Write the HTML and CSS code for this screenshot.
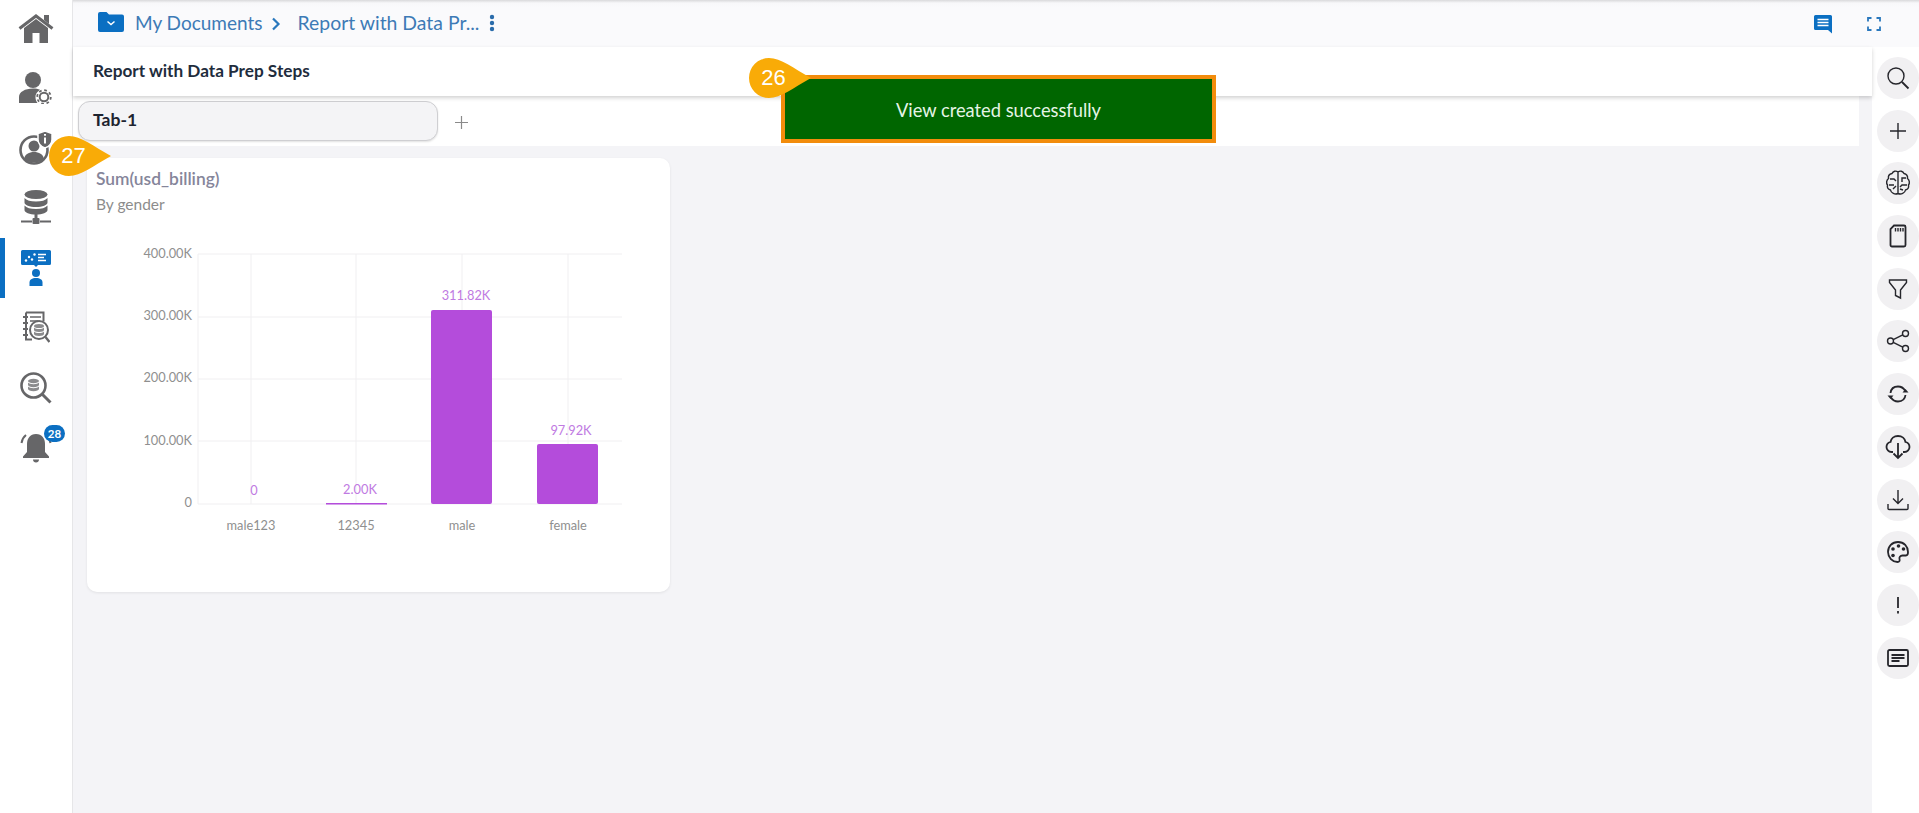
FILE: index.html
```html
<!DOCTYPE html>
<html lang="en">
<head>
    <meta charset="UTF-8">
    <meta name="viewport" content="width=device-width, initial-scale=1.0">
    <title>Report with Data Prep Steps</title>
    <link rel="stylesheet" href="styles.css">
</head>
<body>
    <div class="page">
        <nav class="sidebar">
            <a class="nav-item">
                <svg width="36" height="30" viewBox="0 0 36 30"><path class="fill" d="M6 15 18 6l12 9v15h-8.500V20h-7v10H6z"/><path class="line" d="M1.500 15.500 18 3l16.500 12.500" stroke-width="3"/><path class="fill" d="M26 2h5v9l-5-4z"/></svg>
            </a>
            <a class="nav-item">
                <svg width="34" height="32" viewBox="0 0 34 32"><circle class="fill" cx="14" cy="8" r="8"/><path class="fill" d="M0 31v-6c0-5 6-8.500 14-8.500 3 0 5 .4 7 1.200-3 2-5 4.800-4.500 8.300.2 2 1 3.800 2 5z"/><circle class="line" cx="25" cy="25" r="6.800" stroke-width="1.800" stroke-dasharray="2.700 2.640"/><circle class="line" cx="25" cy="25" r="4.300" stroke-width="2"/></svg>
            </a>
            <a class="nav-item">
                <svg width="34" height="36" viewBox="0 0 34 36"><circle class="line" cx="15" cy="20" r="13.500" stroke-width="2.600"/><circle class="fill" cx="15" cy="16" r="5.500"/><path class="fill" d="M5 29c1-5 5-7 10-7s9 2 10 7c-3 2.500-6 3.500-10 3.500S8 31.500 5 29z"/><path class="fill" d="M26 1l7 2.500v6c0 4-3 7-7 8.500-4-1.500-7-4.500-7-8.500v-6z" stroke="#fff" stroke-width="1.500"/><path class="cut" d="M26 4v1.800M26 7.500v6" stroke-width="2"/></svg>
            </a>
            <a class="nav-item">
                <svg width="30" height="36" viewBox="0 0 30 36"><ellipse class="fill" cx="15" cy="4.500" rx="11.500" ry="4.500"/><path class="fill" d="M3.500 8c2 2.500 6 3.500 11.500 3.500S24.500 10.500 26.500 8v4.500c0 2.500-5 4.500-11.500 4.500S3.500 15 3.500 12.500z"/><path class="fill" d="M3.500 15.500c2 2.500 6 3.500 11.500 3.500s9.500-1 11.500-3.500V20c0 2.500-5 4.500-11.500 4.500S3.500 22.500 3.500 20z"/><path class="fill" d="M13.500 24h3v5h-3z"/><rect class="fill" x="11.500" y="28" width="7" height="6" rx="1"/><path class="line" d="M0 31.500h11M19 31.500h11" stroke-width="2"/></svg>
            </a>
            <a class="nav-item active">
                <svg width="30" height="36" viewBox="0 0 30 36"><path class="blue" d="M1.500 0h27A1.500 1.500 0 0 1 30 1.500V13.500a1.500 1.500 0 0 1-1.500 1.500H17l-2 2-2-2H1.500A1.500 1.500 0 0 1 0 13.500V1.500A1.500 1.500 0 0 1 1.500 0z"/><circle class="white" cx="5" cy="10.500" r="1.200"/><circle class="white" cx="8" cy="7" r="1.200"/><circle class="white" cx="11" cy="9.500" r="1.200"/><circle class="white" cx="13.500" cy="4.500" r="1.200"/><path class="cut" d="M17 4.500h8M17 7.500h6M17 10.500h8" stroke-width="1.300"/><circle class="blue" cx="15" cy="23" r="4"/><path class="blue" d="M8.500 36v-3.500c0-3 2.500-4.500 6.500-4.500s6.500 1.500 6.500 4.500V36z"/></svg>
            </a>
            <a class="nav-item">
                <svg width="28" height="34" viewBox="0 0 28 34"><path class="line" d="M4 1.500h17.500v9M4 1.500v27h6" stroke-width="2"/><path class="line" d="M1 6h5M1 12h5M1 18h5M1 24h5" stroke-width="2"/><path class="line" d="M8 6h11M8 10h8" stroke-width="1.500"/><circle class="line" cx="17" cy="19" r="9" stroke-width="2"/><ellipse class="soft" cx="17" cy="15" rx="5" ry="2"/><path class="soft" d="M12 16.500c1 1 3 1.500 5 1.500s4-.5 5-1.500V19c0 1-2 2-5 2s-5-1-5-2z"/><path class="soft" d="M12 20.500c1 1 3 1.500 5 1.500s4-.5 5-1.500V23c0 1-2 2-5 2s-5-1-5-2z"/><path class="line" d="M23.500 26l4 5" stroke-width="2.400"/></svg>
            </a>
            <a class="nav-item">
                <svg width="32" height="32" viewBox="0 0 32 32"><circle class="line" cx="13.500" cy="13.500" r="12" stroke-width="2.600"/><ellipse class="soft" cx="13.500" cy="9" rx="5.500" ry="2.200"/><path class="soft" d="M8 10.500c1 1 3.200 1.700 5.500 1.700s4.500-.7 5.500-1.700V13c0 1.200-2.500 2.200-5.500 2.200S8 14.200 8 13z"/><path class="soft" d="M8 14.500c1 1 3.200 1.700 5.500 1.700s4.500-.7 5.500-1.700V17c0 1.200-2.500 2.200-5.500 2.200S8 18.200 8 17z"/><path class="line" d="M22.500 22.500l8 8" stroke-width="3"/></svg>
            </a>
            <a class="nav-item bell-item">
                <svg width="32" height="32" viewBox="0 0 32 32"><path class="fill" d="M16 2c6 0 9 4.500 9 10v8l4 4.500v1.500H3v-1.500L7 20v-8C7 6.500 10 2 16 2z"/><path class="fill" d="M13 27.500h6c0 2-1.300 3-3 3s-3-1-3-3z"/><path class="line" d="M1.500 11C2 7.500 3.500 5 6 3M30.500 11C30 7.500 28.500 5 26 3" stroke-width="2"/></svg>
                <span class="bell-count">28</span>
            </a>
        </nav>

        <div class="main">
            <header class="crumbs">
                <svg class="folder" width="26" height="20" viewBox="0 0 26 20"><path class="blue" d="M0 2a2 2 0 0 1 2-2h6.500l2.500 2.500h13a2 2 0 0 1 2 2V18a2 2 0 0 1-2 2H2a2 2 0 0 1-2-2z"/><path class="cut" d="M9.500 9.500l3.500 3 3.500-3" stroke-width="1.500"/></svg>
                <span class="crumb">My Documents</span>
                <svg class="crumb-arrow" width="10" height="14" viewBox="0 0 10 14"><path class="arrow" d="M2 1.500 7.500 7 2 12.500" stroke-width="2.200"/></svg>
                <span class="crumb crumb-report">Report with Data Pr...</span>
                <svg class="kebab" width="6" height="18" viewBox="0 0 6 18"><circle class="dark-blue" cx="3" cy="3" r="2.200"/><circle class="dark-blue" cx="3" cy="9" r="2.200"/><circle class="dark-blue" cx="3" cy="15" r="2.200"/></svg>
                <div class="crumb-tools">
                    <svg width="19" height="19" viewBox="0 0 19 19"><path class="blue" d="M1.500 0h15A1.500 1.500 0 0 1 18 1.500V18.500L14 15H1.500A1.500 1.500 0 0 1 0 13.500v-12A1.500 1.500 0 0 1 1.500 0z"/><path class="cut" d="M3.500 4.500h11M3.500 7.500h11M3.500 10.500h11" stroke-width="1.600"/></svg>
                    <svg width="14" height="14" viewBox="0 0 14 14"><path class="arrow" d="M1 4.500V1h3.500M9.500 1H13v3.500M13 9.500V13H9.500M4.500 13H1V9.500" stroke-width="1.800"/></svg>
                </div>
            </header>

            <div class="workspace">
                <section class="report">
                    <div class="report-title">Report with Data Prep Steps</div>
                    <div class="tab-strip">
                        <div class="tab">Tab-1</div>
                        <svg class="tab-add" width="13" height="13" viewBox="0 0 13 13"><path class="thin" d="M6.500 0v13M0 6.500h13"/></svg>
                    </div>
                    <div class="canvas">
                        <article class="card">
                            <h3 class="card-title">Sum(usd_billing)</h3>
                            <p class="card-sub">By gender</p>
                            <svg class="chart" width="583" height="340" viewBox="87 224 583 340">
                                <path class="grid" d="M198 254H622M198 317H622M198 379H622M198 441H622M198 504H622"/>
                                <path class="grid" d="M198 254V504M251 254V504M356 254V504M462 254V504M568 254V504"/>
                                <rect class="bar" x="326" y="503" width="61" height="1.500"/>
                                <rect class="bar" x="431" y="310" width="61" height="194" rx="2"/>
                                <rect class="bar" x="537" y="444" width="61" height="60" rx="2"/>
                                <text class="y-label" x="192" y="258">400.00K</text>
                                <text class="y-label" x="192" y="320">300.00K</text>
                                <text class="y-label" x="192" y="382">200.00K</text>
                                <text class="y-label" x="192" y="445">100.00K</text>
                                <text class="y-label" x="192" y="507">0</text>
                                <text class="x-label" x="251" y="530">male123</text>
                                <text class="x-label" x="356" y="530">12345</text>
                                <text class="x-label" x="462" y="530">male</text>
                                <text class="x-label" x="568" y="530">female</text>
                                <text class="value" x="254" y="495">0</text>
                                <text class="value" x="360" y="494">2.00K</text>
                                <text class="value" x="466" y="300">311.82K</text>
                                <text class="value" x="571" y="435">97.92K</text>
                            </svg>
                        </article>
                    </div>
                </section>

                <aside class="rail">
                    <button class="rail-btn"><svg width="24" height="24" viewBox="0 0 24 24"><circle class="ink" cx="10" cy="10" r="8"/><path class="ink heavy" d="M16 16l6.500 6.500"/></svg></button>
                    <button class="rail-btn"><svg width="24" height="24" viewBox="0 0 24 24"><path class="ink" d="M12 4v16M4 12h16"/></svg></button>
                    <button class="rail-btn"><svg width="26" height="26" viewBox="0 0 26 26"><path class="ink" d="M13 2v22M13 2c-2-1.500-5-1-6 1.500C4.500 4 3 6 3.500 8.500 1.500 10 1 13 2.500 15c-.5 2.500 1 4.500 3 5 .5 3 4.500 5 7.500 3.500M13 2c2-1.500 5-1 6 1.500C21.500 4 23 6 22.500 8.500c2 1.500 2.500 4.500 1 6.500.5 2.500-1 4.500-3 5-.5 3-4.500 5-7.500 3.500"/><path class="ink" d="M5 9h4l2 2M4 15h5M8 19l3-3M21 8h-4v4M22 15h-5l-2 2M18 20l-3-1"/></svg></button>
                    <button class="rail-btn"><svg width="24" height="24" viewBox="0 0 24 24"><path class="ink heavy" d="M8 1.500h10a1.500 1.500 0 0 1 1.500 1.500v18a1.500 1.500 0 0 1-1.500 1.500H6A1.500 1.500 0 0 1 4.500 21V5z"/><path class="ink" d="M9.500 4v3.500M12 4v3.500M14.500 4v3.500M17 4v3.500"/></svg></button>
                    <button class="rail-btn"><svg width="24" height="24" viewBox="0 0 24 24"><path class="ink" d="M3.500 3h17v2.500L14.500 13v8l-5-2.500V13L3.500 5.500z"/></svg></button>
                    <button class="rail-btn"><svg width="24" height="24" viewBox="0 0 24 24"><circle class="ink" cx="4.500" cy="12" r="3"/><circle class="ink" cx="19.500" cy="4.500" r="3"/><circle class="ink" cx="19.500" cy="19.500" r="3"/><path class="ink" d="M7.200 10.600l9.600-4.800M7.200 13.400l9.600 4.800"/></svg></button>
                    <button class="rail-btn"><svg width="24" height="24" viewBox="0 0 24 24"><path class="ink heavy" d="M4.500 11C5 7 8 4.500 12 4.500c3 0 5.500 1.500 7 4M19.500 13c-.5 4-3.500 6.500-7.500 6.500-3 0-5.500-1.500-7-4"/><path class="solid" d="M16.500 10.500h6L19.500 7zM1.500 13.500h6L4.500 17z"/></svg></button>
                    <button class="rail-btn"><svg width="26" height="26" viewBox="0 0 26 26"><path class="ink heavy" d="M8 18H6.500C3.500 18 1.500 15.500 1.500 13c0-2.500 2-4.500 4-5 .5-3.500 3.500-6 7.500-6s7 2.500 7.500 6c2 .5 4 2.500 4 5 0 2.500-2 5-5 5H18"/><path class="ink heavy" d="M13 9v15M8.500 19.500 13 24l4.500-4.500"/></svg></button>
                    <button class="rail-btn"><svg width="24" height="24" viewBox="0 0 24 24"><path class="ink" d="M12 2v13M7 10.500l5 5 5-5"/><path class="ink" d="M2 16v4.500a1 1 0 0 0 1 1h18a1 1 0 0 0 1-1V16"/></svg></button>
                    <button class="rail-btn"><svg width="24" height="24" viewBox="0 0 24 24"><path class="ink heavy" d="M12 2C6 2 2 6.500 2 12s4.500 10 9.500 10c2 0 2.500-1.500 2-3-.5-1.500.5-3.500 3-3.500H20c1.500 0 2-1.500 2-3.500C22 6.500 18 2 12 2z"/><circle class="solid" cx="7" cy="9" r="1.800"/><circle class="solid" cx="12.500" cy="6" r="1.800"/><circle class="solid" cx="17.500" cy="9" r="1.800"/><circle class="solid" cx="7" cy="15.500" r="1.800"/></svg></button>
                    <button class="rail-btn"><svg width="24" height="24" viewBox="0 0 24 24"><path class="ink heavy" d="M12 4v11"/><path class="ink heavy" d="M12 18v2.500"/></svg></button>
                    <button class="rail-btn"><svg width="24" height="24" viewBox="0 0 24 24"><rect class="ink heavy" x="2" y="4" width="20" height="16" rx="1.500"/><path class="ink heavy" d="M5.500 9h13M5.500 12h13M5.500 15h8"/></svg></button>
                </aside>
            </div>
        </div>

        <div class="toast">View created successfully</div>

        <div class="callout callout-26">
            <svg width="62" height="40" viewBox="0 0 62 40"><path d="M20 0c12 0 24 10 42 20C44 30 32 40 20 40A20 20 0 0 1 20 0z"/></svg>
            <span>26</span>
        </div>
        <div class="callout callout-27">
            <svg width="62" height="40" viewBox="0 0 62 40"><path d="M20 0c12 0 24 10 42 20C44 30 32 40 20 40A20 20 0 0 1 20 0z"/></svg>
            <span>27</span>
        </div>
    </div>
</body>
</html>
```

FILE: styles.css
```css
* {
    box-sizing: border-box;
}

html, body {
    height: 100%;
    margin: 0;
    overflow: hidden;
}

body {
    font-family: "Lato", "Noto Sans", sans-serif;
    color: #1f2d3d;
    background-color: #fff;
}

.page {
    position: relative;
    display: flex;
    height: 100%;
    overflow: hidden;
}

/* left nav */
.sidebar {
    flex: 0 0 73px;
    display: flex;
    flex-direction: column;
    margin-top: -2px;
    background-color: #fff;
    border-right: 1px solid #e6e6e8;
}

.nav-item {
    position: relative;
    display: flex;
    flex: 0 0 60px;
    align-items: center;
    justify-content: center;
}

.nav-item.active {
    box-shadow: inset 5px 0 0 #0b6fc2;
}

.bell-count {
    position: absolute;
    top: 7px;
    left: 44px;
    width: 21px;
    height: 17px;
    border-radius: 9px;
    background-color: #0b6fc2;
    color: #fff;
    font-size: 11.500px;
    font-weight: 700;
    line-height: 17px;
    text-align: center;
}

.fill { fill: #666668; }
.soft { fill: #8b8b8d; }
.blue { fill: #0b6fc2; }
.white { fill: #fff; }
.dark-blue { fill: #2a6cab; }
.line { fill: none; stroke: #666668; }
.cut { fill: none; stroke: #fff; }
.arrow { fill: none; stroke: #2a78bd; }
.thin { fill: none; stroke: #8a8a8a; stroke-width: 1.2; }

/* header */
.main {
    flex: 1;
    display: flex;
    flex-direction: column;
    min-width: 0;
    background-color: #f4f4f7;
}

.crumbs {
    flex: 0 0 47px;
    display: flex;
    align-items: center;
    padding: 0 38px 3px 25px;
    background: linear-gradient(#d9d9db, #f8f8fa 3px, #fafafc 8px);
}

.crumb {
    margin-top: 2px;
    color: #3d7ab6;
    font-size: 19px;
    line-height: 24px;
}

.folder {
    margin-right: 11px;
}

.crumb-arrow {
    margin: 3px 0 0 8px;
}

.crumb-report {
    margin-left: 17px;
    font-size: 19.400px;
}

.kebab {
    margin: 2px 0 0 10px;
}

.crumb-tools {
    display: flex;
    align-items: center;
    gap: 34px;
    margin: 4px 0 0 auto;
}

.workspace {
    flex: 1;
    display: flex;
    min-height: 0;
}

.report {
    flex: 1;
    display: flex;
    flex-direction: column;
    min-width: 0;
}

.report-title {
    position: relative;
    flex: 0 0 49px;
    padding-left: 20px;
    background-color: #fff;
    box-shadow: 0 2px 4px rgba(0, 0, 0, .18);
    font-size: 17.200px;
    font-weight: 700;
    line-height: 47px;
}

.tab-strip {
    flex: 0 0 50px;
    display: flex;
    align-items: center;
    gap: 17px;
    padding: 0 0 0 5px;
    margin-right: 13px;
    background-color: #fff;
}

.tab {
    width: 360px;
    height: 40px;
    padding-left: 14px;
    background-color: #f4f4f6;
    border: 1px solid #cfcfd2;
    border-radius: 12px;
    box-shadow: 0 1px 2px rgba(0, 0, 0, .12);
    font-size: 17.500px;
    font-weight: 700;
    line-height: 36px;
    color: #1e2430;
}

.tab-add {
    margin-top: 3px;
}

.canvas {
    flex: 1;
    padding: 12px 14px;
}

.card {
    width: 583px;
    height: 434px;
    padding-top: 11px;
    background-color: #fff;
    border-radius: 10px;
    box-shadow: 0 1px 3px rgba(0, 0, 0, .08);
}

.card-title {
    margin: 0 0 5px;
    padding-left: 9px;
    color: #85859a;
    font-size: 17.400px;
    font-weight: 600;
    line-height: 20px;
}

.card-sub {
    margin: 0 0 10px;
    padding-left: 9px;
    color: #8c8c8c;
    font-size: 15.500px;
    line-height: 20px;
}

.chart {
    display: block;
    font-size: 12.800px;
}

.grid {
    fill: none;
    stroke: #f0eff1;
    stroke-width: 1;
}

.bar { fill: #b44cdb; }
.y-label { fill: #8f8f8f; text-anchor: end; }
.x-label { fill: #8f8f8f; text-anchor: middle; }
.value { fill: #c07ae2; text-anchor: middle; }

/* right rail */
.rail {
    flex: 0 0 46px;
    display: flex;
    flex-direction: column;
    gap: 10.700px;
    padding: 10px 0 0 5px;
    background-color: #fff;
}

.rail-btn {
    display: flex;
    flex: 0 0 42px;
    width: 42px;
    align-items: center;
    justify-content: center;
    padding: 0;
    background-color: #f1f0f2;
    border: none;
    border-radius: 50%;
}

.ink { fill: none; stroke: #26262c; stroke-width: 1.400; }
.ink.heavy { stroke-width: 1.800; }
.solid { fill: #26262c; }

/* toast + numbered callouts sit on top of the page */
.toast {
    position: absolute;
    top: 75px;
    left: 781px;
    width: 435px;
    height: 68px;
    background-color: #006600;
    border: 4px solid #f28c0c;
    color: #e6f5e6;
    font-size: 18.300px;
    line-height: 62px;
    text-align: center;
}

.callout {
    position: absolute;
    width: 62px;
    height: 40px;
}

.callout svg {
    display: block;
    fill: #f9ab07;
}

.callout span {
    position: absolute;
    top: 0;
    left: 0;
    width: 49px;
    color: #fff;
    font-family: "Liberation Sans", sans-serif;
    font-size: 22px;
    line-height: 40px;
    text-align: center;
}

.callout-26 {
    top: 58px;
    left: 749px;
}

.callout-27 {
    top: 136px;
    left: 49px;
}
```
